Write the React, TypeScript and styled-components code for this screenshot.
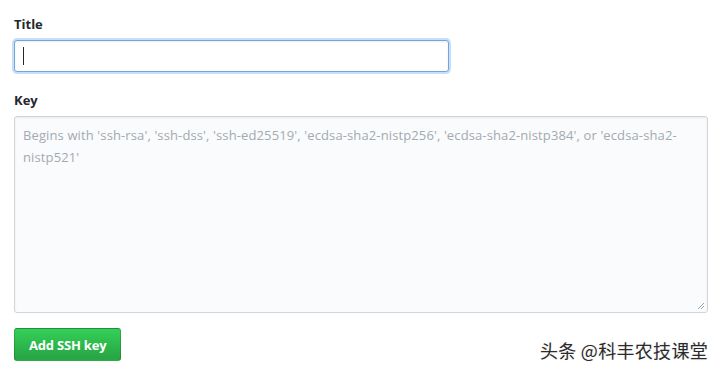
import React from "react";
import styled, { createGlobalStyle } from "styled-components";

const GlobalStyle = createGlobalStyle`
  html, body {
    margin: 0;
    padding: 0;
    background: #ffffff;
  }
  body {
    font-family: "Open Sans", "Noto Sans", "Liberation Sans", sans-serif;
    color: #24292e;
  }
`;

const Page = styled.div`
  position: relative;
  width: 720px;
  height: 374px;
  box-sizing: border-box;
  padding: 14px 12px 0 14px;
  overflow: hidden;
`;

const Field = styled.div<{ $gap?: number }>`
  display: flex;
  flex-direction: column;
  margin-bottom: ${(p) => p.$gap ?? 0}px;
`;

const Label = styled.label`
  font-size: 13px;
  font-weight: 700;
  line-height: 20px;
  margin-bottom: 6px;
  color: #24292e;
`;

const TitleInput = styled.div`
  width: 435px;
  height: 32px;
  box-sizing: border-box;
  border: 1px solid #6fa6e0;
  border-radius: 3px;
  background: #fff;
  box-shadow: inset 0 1px 2px rgba(27, 31, 35, 0.075),
    0 0 0 2px rgba(3, 102, 214, 0.22);
  display: flex;
  align-items: center;
  padding-left: 8px;
`;

const Caret = styled.span`
  width: 1px;
  height: 18px;
  background: #24292e;
`;

const KeyArea = styled.div`
  position: relative;
  width: 694px;
  height: 197px;
  box-sizing: border-box;
  border: 1px solid #d1d5da;
  border-radius: 3px;
  background: #fafbfc;
  box-shadow: inset 0 1px 2px rgba(27, 31, 35, 0.075);
  padding: 7px 8px;
`;

const Placeholder = styled.div`
  font-size: 13px;
  line-height: 22px;
  letter-spacing: 0.12px;
  color: #a3aab1;
`;

const Grip = styled.svg`
  position: absolute;
  right: 2px;
  bottom: 2px;
`;

const GreenButton = styled.button`
  height: 33px;
  padding: 0 14px;
  border: 1px solid rgba(27, 31, 35, 0.2);
  border-radius: 3px;
  background-image: linear-gradient(-180deg, #34d058 0%, #28a745 90%);
  color: #fff;
  font-family: "Open Sans", "Noto Sans", sans-serif;
  font-size: 13px;
  font-weight: 700;
  letter-spacing: -0.2px;
  cursor: pointer;
`;

const Watermark = styled.div`
  position: absolute;
  right: 12px;
  bottom: 11px;
  font-family: "Noto Sans CJK SC", sans-serif;
  font-size: 18px;
  letter-spacing: 0.3px;
  color: #2b2b2b;
  text-shadow: 1px 1px 1px rgba(255, 255, 255, 0.9), 0 0 2px rgba(0, 0, 0, 0.15);
`;

export default function App() {
  return (
    <Page>
      <GlobalStyle />
      <Field $gap={18}>
        <Label>Title</Label>
        <TitleInput>
          <Caret />
        </TitleInput>
      </Field>
      <Field $gap={15}>
        <Label>Key</Label>
        <KeyArea>
          <Placeholder>
            Begins with 'ssh-rsa', 'ssh-dss', 'ssh-ed25519', 'ecdsa-sha2-nistp256', 'ecdsa-sha2-nistp384', or 'ecdsa-sha2-nistp521'
          </Placeholder>
          <Grip width="8" height="8" viewBox="0 0 8 8">
            <path d="M7 1 L1 7 M7 4 L4 7" stroke="#9aa0a6" strokeWidth="1" />
          </Grip>
        </KeyArea>
      </Field>
      <GreenButton>Add SSH key</GreenButton>
      <Watermark>头条 @科丰农技课堂</Watermark>
    </Page>
  );
}
